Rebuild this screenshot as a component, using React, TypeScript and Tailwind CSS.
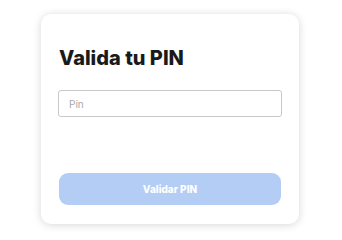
import React from "react";

export default function App() {
  return (
    <div className="w-[342px] h-[233px] bg-white pt-[14px] pl-[41px]" style={{ fontFamily: "Inter, 'Noto Sans', sans-serif" }}>
      <div className="w-[258px] h-[210px] bg-white rounded-[10px] shadow-[0_1px_8px_rgba(0,0,0,0.16)] px-[17px] pt-[32px] flex flex-col">
        <h1 className="text-[20px] leading-[24px] font-extrabold text-[#1a1a1a] pl-[1px]">Valida tu PIN</h1>
        <input
          placeholder="Pin"
          className="mt-[20px] h-[27px] w-full border border-[#c9c9c9] rounded-[3px] px-[10px] text-[10px] text-[#333] placeholder:text-[#a8a8a8] outline-none"
        />
        <button className="mt-[56px] h-[32px] w-[222px] ml-[1px] rounded-[9px] bg-[#b3cdf4] text-white text-[10px] font-extrabold">
          Validar PIN
        </button>
      </div>
    </div>
  );
}
